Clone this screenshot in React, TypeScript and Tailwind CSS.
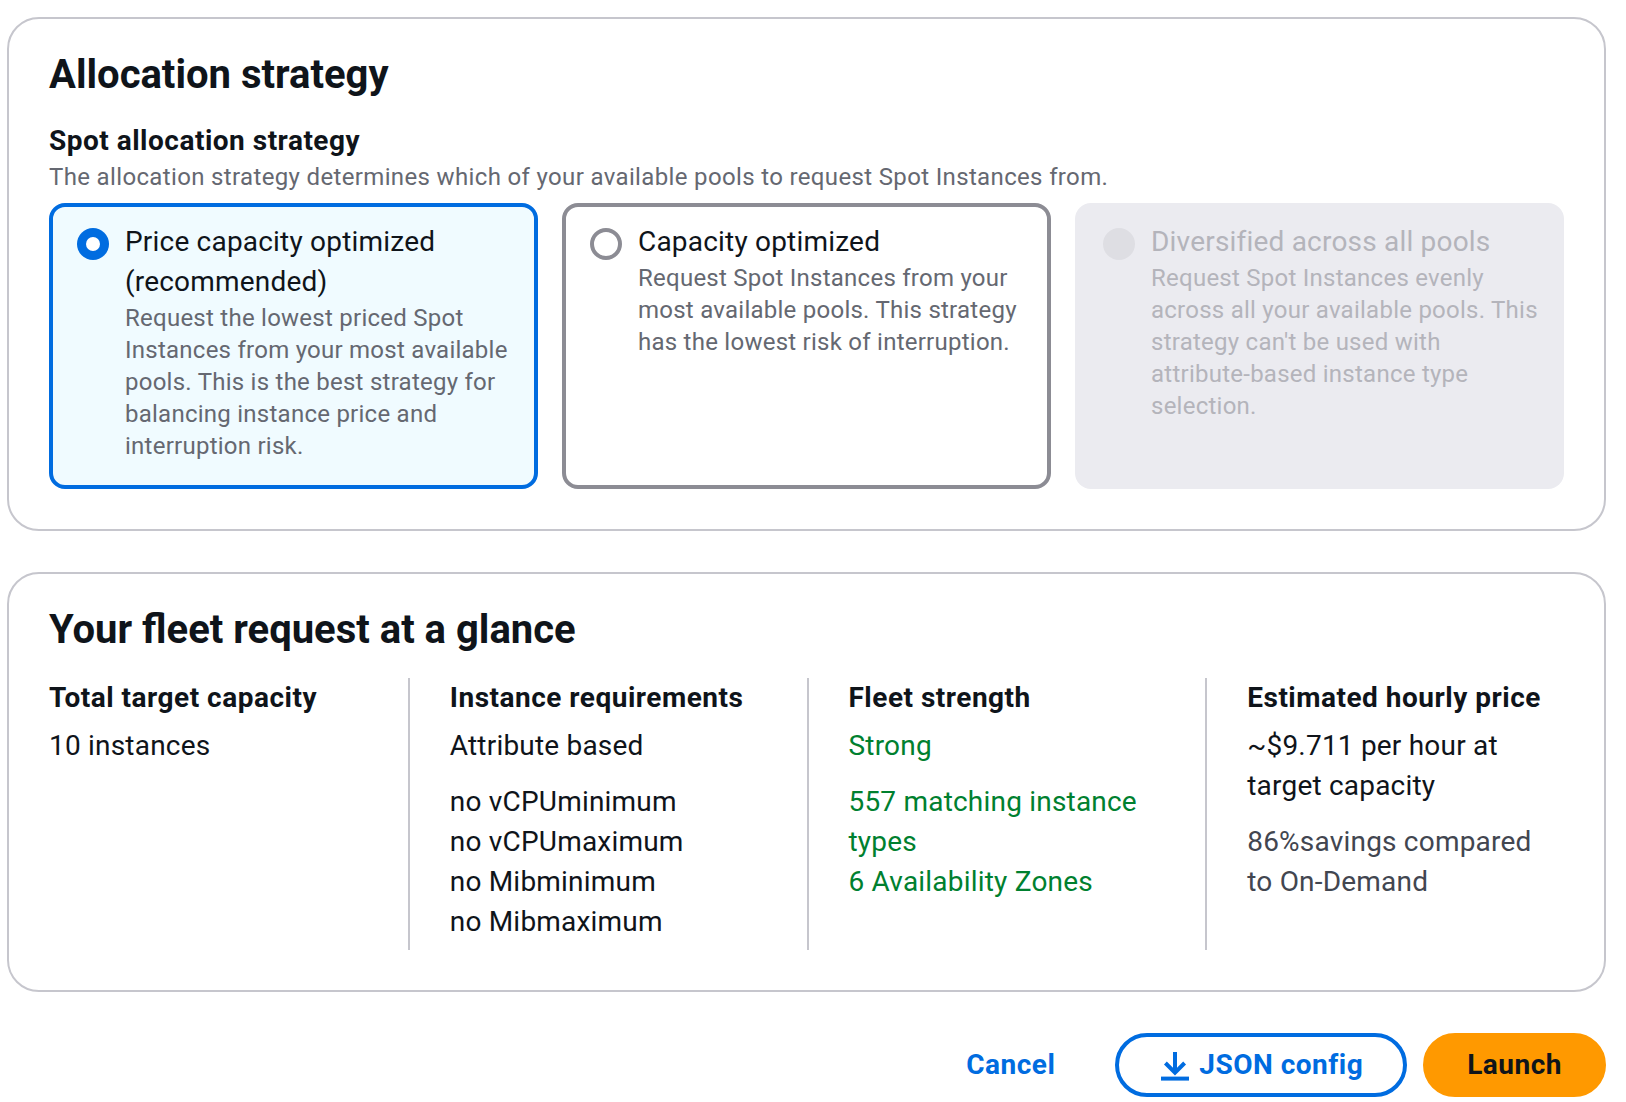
import React from "react";

interface TileProps {
  title: string[];
  desc: string[];
  selected?: boolean;
  disabled?: boolean;
}

function Radio({ selected, disabled }: { selected?: boolean; disabled?: boolean }) {
  if (disabled) {
    return <div className="mt-[6px] h-[32px] w-[32px] shrink-0 rounded-full bg-[#dedee3]" />;
  }
  if (selected) {
    return (
      <div className="mt-[6px] flex h-[32px] w-[32px] shrink-0 items-center justify-center rounded-full bg-[#006ce0]">
        <div className="h-[14px] w-[14px] rounded-full bg-white" />
      </div>
    );
  }
  return <div className="mt-[6px] h-[32px] w-[32px] shrink-0 rounded-full border-4 border-[#8c8c94] bg-white" />;
}

function Tile({ title, desc, selected = false, disabled = false }: TileProps) {
  const box = selected
    ? "border-[#006ce0] bg-[#f0fbff]"
    : disabled
      ? "border-transparent bg-[#ebebf0]"
      : "border-[#8c8c94] bg-white";
  return (
    <div className={`flex gap-[16px] rounded-[16px] border-4 px-[24px] pt-[15px] pb-[23px] ${box}`}>
      <Radio selected={selected} disabled={disabled} />
      <div className="flex min-w-0 flex-col whitespace-nowrap">
        <div
          className={`text-[28px] leading-[40px] tracking-[0.2px] ${disabled ? "text-[#b4b4bb]" : "text-[#0f141a]"}`}
        >
          {title.map((t) => (
            <div key={t}>{t}</div>
          ))}
        </div>
        <div
          className={`text-[24px] leading-[32px] tracking-[0.25px] ${disabled ? "text-[#b4b4bb]" : "text-[#656871]"}`}
        >
          {desc.map((t) => (
            <div key={t}>{t}</div>
          ))}
        </div>
      </div>
    </div>
  );
}

function Column({
  label,
  first = false,
  children,
}: {
  label: string;
  first?: boolean;
  children: React.ReactNode;
}) {
  return (
    <div className={`whitespace-nowrap px-[40px] pb-[8px] ${first ? "" : "border-l-2 border-[#c6c6cd]"}`}>
      <div className="text-[28px] font-bold leading-[40px] tracking-[0.5px] text-[#0f141a]">{label}</div>
      {children}
    </div>
  );
}

function DownloadIcon() {
  return (
    <svg width="32" height="32" viewBox="0 0 16 16" fill="none" stroke="#006ce0" strokeWidth="2" className="shrink-0">
      <path d="M8 1.5v10" />
      <path d="M3.2 7l4.8 4.8L12.8 7" />
      <path d="M1 14.8h14" />
    </svg>
  );
}

export default function App() {
  return (
    <div className="min-h-screen bg-white font-['Roboto','Liberation_Sans',sans-serif] antialiased">
      <div className="flex w-[1606px] flex-col pt-[17px] pl-[7px]">
        {/* Allocation strategy */}
        <section className="rounded-[32px] border-2 border-[#c6c6cd] bg-white px-[40px] pt-[32px] pb-[40px]">
          <h2 className="text-[40px] font-bold leading-[48px] text-[#0f141a]">Allocation strategy</h2>
          <div className="mt-[22px] text-[28px] font-bold leading-[40px] tracking-[0.5px] text-[#0f141a]">
            Spot allocation strategy
          </div>
          <div className="text-[24px] leading-[32px] tracking-[0.35px] text-[#656871]">
            The allocation strategy determines which of your available pools to request Spot Instances from.
          </div>
          <div className="mt-[10px] grid grid-cols-3 gap-[24px]">
            <Tile
              selected
              title={["Price capacity optimized", "(recommended)"]}
              desc={[
                "Request the lowest priced Spot",
                "Instances from your most available",
                "pools. This is the best strategy for",
                "balancing instance price and",
                "interruption risk.",
              ]}
            />
            <Tile
              title={["Capacity optimized"]}
              desc={[
                "Request Spot Instances from your",
                "most available pools. This strategy",
                "has the lowest risk of interruption.",
              ]}
            />
            <Tile
              disabled
              title={["Diversified across all pools"]}
              desc={[
                "Request Spot Instances evenly",
                "across all your available pools. This",
                "strategy can't be used with",
                "attribute-based instance type",
                "selection.",
              ]}
            />
          </div>
        </section>

        {/* Fleet request summary */}
        <section className="mt-[41px] rounded-[32px] border-2 border-[#c6c6cd] bg-white px-[40px] pt-[32px] pb-[40px]">
          <h2 className="text-[40px] font-bold leading-[48px] text-[#0f141a]">Your fleet request at a glance</h2>
          <div className="-mx-[40px] mt-[24px] grid grid-cols-4 text-[28px] leading-[40px] tracking-[0.2px]">
            <Column label="Total target capacity" first>
              <div className="mt-[8px] text-[#0f141a]">10 instances</div>
            </Column>
            <Column label="Instance requirements">
              <div className="mt-[8px] text-[#0f141a]">Attribute based</div>
              <div className="mt-[16px] text-[#0f141a]">
                <div>no vCPUminimum</div>
                <div>no vCPUmaximum</div>
                <div>no Mibminimum</div>
                <div>no Mibmaximum</div>
              </div>
            </Column>
            <Column label="Fleet strength">
              <div className="mt-[8px] text-[#00802f]">Strong</div>
              <div className="mt-[16px] text-[#00802f]">
                <div>557 matching instance</div>
                <div>types</div>
                <div>6 Availability Zones</div>
              </div>
            </Column>
            <Column label="Estimated hourly price">
              <div className="mt-[8px] text-[#0f141a]">
                <div>~$9.711 per hour at</div>
                <div>target capacity</div>
              </div>
              <div className="mt-[16px] text-[#424650]">
                <div>86%savings compared</div>
                <div>to On-Demand</div>
              </div>
            </Column>
          </div>
        </section>

        {/* Actions */}
        <div className="mt-[41px] flex justify-end gap-[16px]">
          <button className="flex h-[64px] items-center rounded-full border-4 border-transparent px-[40px] text-[28px] font-bold leading-[40px] tracking-[0.5px] text-[#006ce0]">
            Cancel
          </button>
          <button className="flex h-[64px] items-center gap-[8px] rounded-full border-4 border-[#006ce0] bg-white px-[40px] text-[28px] font-bold leading-[40px] tracking-[0.5px] text-[#006ce0]">
            <DownloadIcon />
            JSON config
          </button>
          <button className="flex h-[64px] items-center rounded-full border-4 border-[#ff9900] bg-[#ff9900] px-[40px] text-[28px] font-bold leading-[40px] tracking-[0.5px] text-[#0f141a]">
            Launch
          </button>
        </div>
      </div>
    </div>
  );
}
